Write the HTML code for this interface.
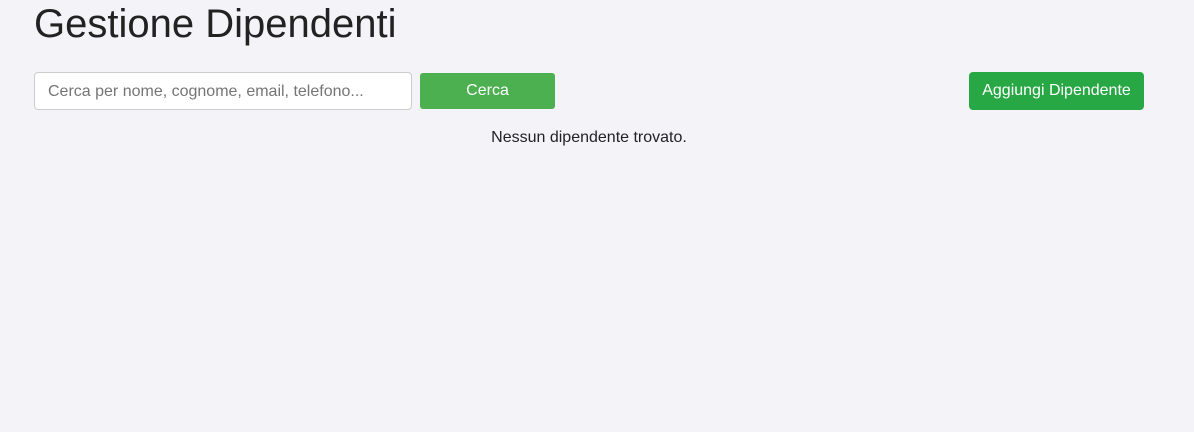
<!DOCTYPE html>
<html><head><style>
body{margin:0;background:#f4f3f8;font-family:"Liberation Sans",sans-serif;width:1194px;height:432px;position:relative;overflow:hidden}
h1{position:absolute;left:34px;top:1px;margin:0;font-size:40px;font-weight:normal;color:#222;line-height:46px}
.inp{position:absolute;left:34px;top:72px;width:378px;height:38px;border:1px solid #ccc;border-radius:4px;background:#fff;box-sizing:border-box;font-size:16px;color:#757575;padding-left:13px;line-height:37px}
.b1{position:absolute;left:420px;top:73px;width:135px;height:36px;background:#4caf50;border-radius:3px;color:#fff;font-size:16px;text-align:center;line-height:36px}
.b2{position:absolute;left:969px;top:72px;width:175px;height:38px;background:#28a745;border-radius:4px;color:#fff;font-size:16px;text-align:center;line-height:38px}
.msg{position:absolute;left:0;width:1178px;top:129px;text-align:center;font-size:16px;color:#222}
</style></head><body>
<h1>Gestione Dipendenti</h1>
<div class="inp">Cerca per nome, cognome, email, telefono...</div>
<div class="b1">Cerca</div>
<div class="b2">Aggiungi Dipendente</div>
<div class="msg">Nessun dipendente trovato.</div>
</body></html>
